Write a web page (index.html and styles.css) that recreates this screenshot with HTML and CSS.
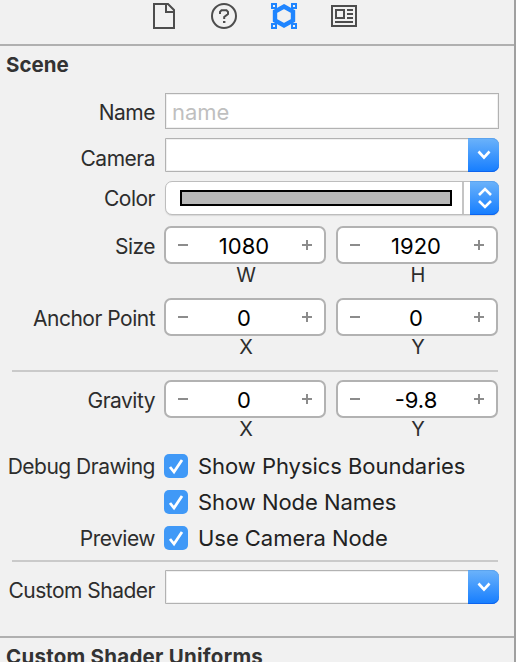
FILE: index.html
```html
<!DOCTYPE html>
<html lang="en">
<head>
<meta charset="utf-8">
<title>Scene Inspector</title>
<link rel="stylesheet" href="styles.css">
</head>
<body>
<div class="panel">
  <nav class="tabs">
    <svg class="tab" width="26" height="28" viewBox="0 0 26 28" fill="none" stroke="#4d4d4d" stroke-width="2"><path d="M3 2H17L23 8V26H3Z"/><path d="M15 3V10H22"/></svg>
    <svg class="tab" width="26" height="28" viewBox="0 0 26 28" fill="none" stroke="#4d4d4d" stroke-width="2"><circle cx="13" cy="14" r="12"/><path d="M9 12V9.8L10.5 8.2H15.5L17 9.8V12L13.2 15V17"/><path d="M12 20H14.4"/></svg>
    <svg class="tab" width="26" height="28" viewBox="0 0 26 28" fill="none" stroke="#1f85ff" stroke-width="2"><path stroke-width="4.4" d="M13 4.5L22 9.5V18.5L13 23.5L4 18.5V9.5Z"/><path fill="#f1f1f1" d="M1 2H5V6H1ZM21 2H25V6H21ZM1 22H5V26H1ZM21 22H25V26H21Z"/></svg>
    <svg class="tab" width="26" height="28" viewBox="0 0 26 28" fill="none" stroke="#4d4d4d" stroke-width="2"><path d="M1 4H25V24H1ZM5 8H13V16H5ZM16 8H22M16 12H22M16 16H22M4 20H22"/></svg>
  </nav>
  <h2 class="heading">Scene</h2>
  <div class="form">
    <div class="row name-row"><label class="label down1">Name</label><div class="field">name</div></div>
    <div class="row camera-row"><label class="label down3">Camera</label><div class="combo"><span class="arrow"><svg width="14" height="10" viewBox="0 0 14 10"><path d="M1.5 1.5L7 7.5L12.5 1.5"/></svg></span></div></div>
    <div class="row color-row"><label class="label">Color</label><div class="well"><span class="swatch"></span><span class="divider"></span><span class="arrow narrow"><svg width="14" height="22" viewBox="0 0 14 22"><path d="M1 8L7 2L13 8M1 14L7 20L13 14"/></svg></span></div></div>
    <div class="row pair-row size-row"><label class="label down1">Size</label>
      <div class="pair"><div class="stepper"><i class="minus"></i><b>1080</b><i class="plus"></i></div><div class="stepper"><i class="minus"></i><b>1920</b><i class="plus"></i></div><span class="axis">W</span><span class="axis">H</span></div></div>
    <div class="row pair-row anchor-row"><label class="label down1 anchor">Anchor Point</label>
      <div class="pair"><div class="stepper"><i class="minus"></i><b>0</b><i class="plus"></i></div><div class="stepper"><i class="minus"></i><b>0</b><i class="plus"></i></div><span class="axis">X</span><span class="axis">Y</span></div></div>
    <hr class="rule">
    <div class="row pair-row gravity-row"><label class="label down1">Gravity</label>
      <div class="pair"><div class="stepper"><i class="minus"></i><b>0</b><i class="plus"></i></div><div class="stepper"><i class="minus"></i><b>-9.8</b><i class="plus"></i></div><span class="axis">X</span><span class="axis">Y</span></div></div>
    <div class="row check-row"><label class="label">Debug Drawing</label><span class="check"><svg width="24" height="24" viewBox="0 0 24 24"><path d="M6 13L10 18L18 6"/></svg></span><span class="option">Show Physics Boundaries</span></div>
    <div class="row check-row"><label class="label"></label><span class="check"><svg width="24" height="24" viewBox="0 0 24 24"><path d="M6 13L10 18L18 6"/></svg></span><span class="option">Show Node Names</span></div>
    <div class="row check-row"><label class="label">Preview</label><span class="check"><svg width="24" height="24" viewBox="0 0 24 24"><path d="M6 13L10 18L18 6"/></svg></span><span class="option">Use Camera Node</span></div>
    <hr class="rule second">
    <div class="row shader-row"><label class="label down3">Custom Shader</label><div class="combo"><span class="arrow"><svg width="14" height="10" viewBox="0 0 14 10"><path d="M1.5 1.5L7 7.5L12.5 1.5"/></svg></span></div></div>
  </div>
  <h2 class="heading uniforms">Custom Shader Uniforms</h2>
</div>
</body>
</html>
```

FILE: styles.css
```css
* { box-sizing: border-box; }
body {
  margin: 0;
  height: 662px;
  overflow: hidden;
  background: #f1f1f1;
  font-family: Inter, "Liberation Sans", sans-serif;
  font-size: 21px;
  color: #2d2d2d;
}
.panel {
  width: 516px;
  height: 662px;
  overflow: hidden;
  border-right: 2px solid #a0a0a0;
}
.tabs {
  display: flex;
  justify-content: center;
  gap: 34px;
  height: 46px;
  padding: 2px 6px 0 0;
  border-bottom: 2px solid #b0b0b0;
}
.tab { display: block; flex: none; }
.heading {
  margin: 0;
  padding-left: 6px;
  height: 47px;
  font-size: 20.5px;
  line-height: 38px;
  font-weight: 700;
  color: #333;
  white-space: nowrap;
}
.row { display: flex; align-items: center; height: 34px; }
.label {
  flex: none;
  width: 155px;
  margin-right: 10px;
  padding-top: 2px;
  text-align: right;
  line-height: 30px;
  letter-spacing: -0.5px;
  white-space: nowrap;
}
.down1 { padding-top: 4px; }
.down3 { padding-top: 8px; }
.name-row { height: 36px; margin-bottom: 9px; }
.camera-row { margin-bottom: 9px; }
.color-row { margin-bottom: 11px; }
.field, .combo {
  width: 334px;
  height: 100%;
  background: #fff;
  border: 1px solid #b2b2b2;
  box-shadow: inset 0 0 0 1px #f0f0f0;
}
.field { padding: 1px 0 0 6px; line-height: 34px; color: #bfbfbf; font-size: 22px; }
.combo {
  display: flex;
  justify-content: flex-end;
  border-radius: 0 7px 7px 0;
}
.arrow {
  display: flex;
  align-items: center;
  justify-content: center;
  flex: none;
  width: 31px;
  height: 34px;
  margin: -1px -1px 0 0;
  border-radius: 0 7px 7px 0;
  background: linear-gradient(#6cb3fa, #157dff);
  box-shadow: inset 0 1px #5ba3ee, inset 0 -1px #0d64ee;
}
.arrow path { fill: none; stroke: #fff; stroke-width: 2.6; }
.well {
  display: flex;
  width: 334px;
  height: 34px;
  padding-left: 14px;
  border: 1px solid #bdbdbd;
  border-radius: 7px;
  background: #fff;
  box-shadow: 0 1px 1px #d7d7d7;
}
.swatch { width: 272px; height: 16px; margin-top: 8px; border: 2px solid #000; background: #b8b8b8; }
.divider { width: 2px; margin: 0 6px 0 10px; background: #c4c4c4; }
.narrow { width: 29px; }
.pair-row { align-items: flex-start; height: 62px; }
.pair-row .label { margin-right: 9px; padding-top: 6px; }
.size-row, .anchor-row { margin-bottom: 10px; }
.pair { display: grid; grid-template-columns: 162px 162px; column-gap: 10px; }
.stepper {
  display: flex;
  align-items: center;
  justify-content: space-between;
  height: 38px;
  padding: 0 12px;
  border: 2px solid #b2b2b2;
  border-radius: 7px;
  background: #fff;
  color: #000;
}
.stepper b { font-weight: 400; font-size: 22px; padding: 2px 2px 0 0; }
.minus, .plus {
  width: 10px;
  height: 10px;
  background: linear-gradient(#8c8c8c, #8c8c8c) center / 10px 2px no-repeat;
}
.plus { background: linear-gradient(#8c8c8c, #8c8c8c) center / 10px 2px no-repeat, linear-gradient(#8c8c8c, #8c8c8c) center / 2px 10px no-repeat; }
.axis { padding-left: 2px; text-align: center; line-height: 22px; height: 22px; font-size: 20px; }
.rule { height: 2px; margin: 0 16px 8px 12px; border: 0; background: #cacaca; }
.gravity-row { margin-bottom: 6px; }
.check-row { height: 36px; }
.check-row .label { margin-right: 9px; }
.check { width: 24px; height: 24px; border-radius: 5px; background: #4099f7; }
.check svg { display: block; }
.check path { fill: none; stroke: #fff; stroke-width: 2.8; }
.option { margin-left: 10px; font-size: 22px; letter-spacing: -0.04px; color: #222; white-space: nowrap; }
.second { margin-top: 4px; }
.uniforms { height: 60px; margin-top: 32px; border-top: 2px solid #b0b0b0; letter-spacing: 0.25px; }
```
